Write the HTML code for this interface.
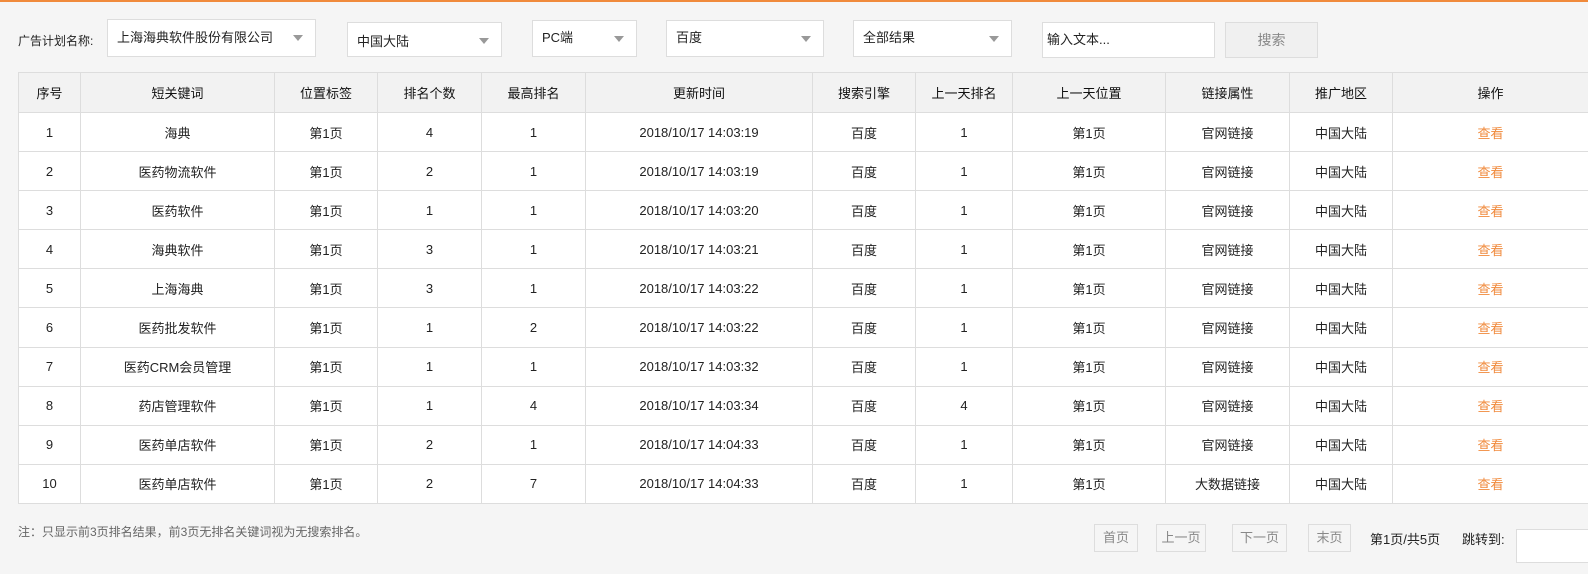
<!DOCTYPE html>
<html><head><meta charset="utf-8"><style>
*{box-sizing:border-box;margin:0;padding:0}
body{width:1588px;height:574px;overflow:hidden;background:#f5f5f5;font-family:"Liberation Sans","Noto Sans CJK SC",sans-serif;font-size:13px;color:#222;position:relative}
.top{position:absolute;left:0;top:0;width:1588px;height:2px;background:#f08a3c}
.a{position:absolute}
.sel{position:absolute;background:#fff;border:1px solid #ddd;padding-left:9px;font-size:13px;line-height:34px}
.sel:after{content:"";position:absolute;right:12px;top:15px;border-left:5px solid transparent;border-right:5px solid transparent;border-top:6px solid #999}
table{position:absolute;left:18px;top:72px;border-collapse:collapse;background:#fff;table-layout:fixed;width:1600px}
td,th{border:1px solid #ddd;text-align:center;height:39.1px;font-size:13px;font-weight:normal;padding:0}
th{background:#f2f2f2;height:40px;color:#111}
.op{color:#f08a3c;padding-right:30px}
.pb{position:absolute;top:524px;height:28px;border:1px solid #ddd;color:#888;text-align:center;line-height:26px;font-size:13px}
</style></head><body>
<div class="top"></div>
<div class="a" style="left:18px;top:32px;font-size:12px">广告计划名称:</div>
<div class="sel" style="left:107px;top:19px;width:209px;height:38px;line-height:36px">上海海典软件股份有限公司</div>
<div class="sel" style="left:347px;top:22px;width:155px;height:35px;line-height:38px">中国大陆</div>
<div class="sel" style="left:532px;top:20px;width:105px;height:37px">PC端</div>
<div class="sel" style="left:666px;top:20px;width:158px;height:37px">百度</div>
<div class="sel" style="left:853px;top:20px;width:159px;height:37px">全部结果</div>
<div class="a" style="left:1042px;top:22px;width:173px;height:36px;background:#fff;border:1px solid #ddd;padding-left:4px;line-height:34px">输入文本...</div>
<div class="a" style="left:1225px;top:22px;width:93px;height:36px;background:#f0f0f0;border:1px solid #ddd;color:#888;text-align:center;line-height:34px;font-size:14px">搜索</div>
<table>
<colgroup><col style="width:62px"><col style="width:194px"><col style="width:103px"><col style="width:104px"><col style="width:104px"><col style="width:227px"><col style="width:103px"><col style="width:97px"><col style="width:153px"><col style="width:124px"><col style="width:103px"><col style="width:226px"></colgroup>
<tr><th>序号</th><th>短关键词</th><th>位置标签</th><th>排名个数</th><th>最高排名</th><th>更新时间</th><th>搜索引擎</th><th>上一天排名</th><th>上一天位置</th><th>链接属性</th><th>推广地区</th><th class="op" style="color:#111">操作</th></tr>
<tr><td>1</td><td>海典</td><td>第1页</td><td>4</td><td>1</td><td>2018/10/17 14:03:19</td><td>百度</td><td>1</td><td>第1页</td><td>官网链接</td><td>中国大陆</td><td class="op">查看</td></tr>
<tr><td>2</td><td>医药物流软件</td><td>第1页</td><td>2</td><td>1</td><td>2018/10/17 14:03:19</td><td>百度</td><td>1</td><td>第1页</td><td>官网链接</td><td>中国大陆</td><td class="op">查看</td></tr>
<tr><td>3</td><td>医药软件</td><td>第1页</td><td>1</td><td>1</td><td>2018/10/17 14:03:20</td><td>百度</td><td>1</td><td>第1页</td><td>官网链接</td><td>中国大陆</td><td class="op">查看</td></tr>
<tr><td>4</td><td>海典软件</td><td>第1页</td><td>3</td><td>1</td><td>2018/10/17 14:03:21</td><td>百度</td><td>1</td><td>第1页</td><td>官网链接</td><td>中国大陆</td><td class="op">查看</td></tr>
<tr><td>5</td><td>上海海典</td><td>第1页</td><td>3</td><td>1</td><td>2018/10/17 14:03:22</td><td>百度</td><td>1</td><td>第1页</td><td>官网链接</td><td>中国大陆</td><td class="op">查看</td></tr>
<tr><td>6</td><td>医药批发软件</td><td>第1页</td><td>1</td><td>2</td><td>2018/10/17 14:03:22</td><td>百度</td><td>1</td><td>第1页</td><td>官网链接</td><td>中国大陆</td><td class="op">查看</td></tr>
<tr><td>7</td><td>医药CRM会员管理</td><td>第1页</td><td>1</td><td>1</td><td>2018/10/17 14:03:32</td><td>百度</td><td>1</td><td>第1页</td><td>官网链接</td><td>中国大陆</td><td class="op">查看</td></tr>
<tr><td>8</td><td>药店管理软件</td><td>第1页</td><td>1</td><td>4</td><td>2018/10/17 14:03:34</td><td>百度</td><td>4</td><td>第1页</td><td>官网链接</td><td>中国大陆</td><td class="op">查看</td></tr>
<tr><td>9</td><td>医药单店软件</td><td>第1页</td><td>2</td><td>1</td><td>2018/10/17 14:04:33</td><td>百度</td><td>1</td><td>第1页</td><td>官网链接</td><td>中国大陆</td><td class="op">查看</td></tr>
<tr><td>10</td><td>医药单店软件</td><td>第1页</td><td>2</td><td>7</td><td>2018/10/17 14:04:33</td><td>百度</td><td>1</td><td>第1页</td><td>大数据链接</td><td>中国大陆</td><td class="op">查看</td></tr>
</table>
<div class="a" style="left:18px;top:523px;font-size:12px;color:#666">注：只显示前3页排名结果，前3页无排名关键词视为无搜索排名。</div>
<div class="pb" style="left:1094px;width:44px">首页</div>
<div class="pb" style="left:1156px;width:50px">上一页</div>
<div class="pb" style="left:1232px;width:55px">下一页</div>
<div class="pb" style="left:1308px;width:43px">末页</div>
<div class="a" style="left:1370px;top:529px">第1页/共5页</div>
<div class="a" style="left:1462px;top:529px">跳转到:</div>
<div class="a" style="left:1516px;top:529px;width:80px;height:34px;background:#fff;border:1px solid #ddd"></div>
</body></html>
